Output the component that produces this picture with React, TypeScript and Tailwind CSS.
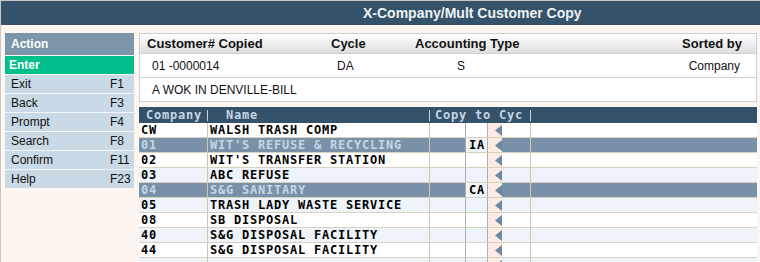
import React from "react";

const menu = [
  { label: "Exit", key: "F1" },
  { label: "Back", key: "F3" },
  { label: "Prompt", key: "F4" },
  { label: "Search", key: "F8" },
  { label: "Confirm", key: "F11" },
  { label: "Help", key: "F23" },
];

type Row = { c: string; n: string; sel?: boolean; cyc?: string };

const rows: Row[] = [
  { c: "CW", n: "WALSH TRASH COMP" },
  { c: "01", n: "WIT'S REFUSE & RECYCLING", sel: true, cyc: "IA" },
  { c: "02", n: "WIT'S TRANSFER STATION" },
  { c: "03", n: "ABC REFUSE" },
  { c: "04", n: "S&G SANITARY", sel: true, cyc: "CA" },
  { c: "05", n: "TRASH LADY WASTE SERVICE" },
  { c: "08", n: "SB DISPOSAL" },
  { c: "40", n: "S&G DISPOSAL FACILITY" },
  { c: "44", n: "S&G DISPOSAL FACILITY" },
  { c: "", n: "" },
];

const mono = "font-['DejaVu_Sans_Mono',monospace] font-bold text-[12px] tracking-[0.78px] whitespace-pre";

function Arrow() {
  return (
    <svg width="7" height="11" viewBox="0 0 7 11">
      <polygon points="7,0 7,11 0,5.5" fill="#6b89a3" />
    </svg>
  );
}

export default function App() {
  return (
    <div className="w-[760px] h-[262px] overflow-hidden bg-[#fdf6f0] border-t border-l border-[#c8c8c8] font-['Liberation_Sans',Arial,sans-serif]">
      <div className="h-[24px] bg-[#345269] text-[#eef2f5] font-bold text-[14px] flex items-center pl-[362px]">
        X-Company/Mult Customer Copy
      </div>
      <div className="flex pt-[8px] pl-[4px]">
        <div className="w-[129px] flex flex-col">
          <div className="h-[22px] bg-[#7b95aa] text-white font-bold text-[12px] pl-[6px] flex items-center">
            Action
          </div>
          <div className="h-[19px] border-t border-[#f4f7fa] bg-[#00bf8a] text-white font-bold text-[12px] pl-[4px] flex items-center">
            Enter
          </div>
          {menu.map((m) => (
            <div
              key={m.label}
              className="h-[19px] border-t border-[#f4f7fa] bg-[#c9d9e5] text-[#111] text-[12px] flex items-center"
            >
              <span className="pl-[6px] w-[105px]">{m.label}</span>
              <span>{m.key}</span>
            </div>
          ))}
        </div>
        <div className="ml-[5px] w-[618px] flex flex-col">
          <div className="border border-[#cfcfcf] bg-white text-[#111]">
            <div className="h-[19px] flex items-center font-bold text-[13px] bg-gradient-to-b from-white to-[#dedede]">
              <span className="pl-[7px] w-[191px]">Customer# Copied</span>
              <span className="w-[84px]">Cycle</span>
              <span>Accounting Type</span>
              <span className="flex-1 text-right pr-[14px]">Sorted by</span>
            </div>
            <div className="h-[24px] border-t border-[#d0d0d0] flex items-center text-[12px]">
              <span className="pl-[12px] w-[197px]">01 -0000014</span>
              <span className="w-[120px]">DA</span>
              <span>S</span>
              <span className="flex-1 text-right pr-[16px]">Company</span>
            </div>
            <div className="h-[24px] border-t border-[#d0d0d0] flex items-center text-[12px]">
              <span className="pl-[12px]">A WOK IN DENVILLE-BILL</span>
            </div>
          </div>
          <div className="mt-[5px]">
            <div className={`h-[16px] bg-[#345269] text-[#c4d6e6] flex items-center ${mono}`}>
              <span className="w-[68px] pl-[7px]">Company</span>
              <span className="w-px h-[11px] bg-[#c4d6e6]" />
              <span className="w-[221px] pl-[18px]">Name</span>
              <span className="w-px h-[11px] bg-[#c4d6e6]" />
              <span className="w-[100px] pl-[5px]">Copy to Cyc</span>
              <span className="w-px h-[11px] bg-[#c4d6e6]" />
            </div>
            {rows.map((r, i) => {
              const bg = r.sel ? "bg-[#7891a8]" : i % 2 ? "bg-[#eef3f9]" : "bg-white";
              const fg = r.sel ? "text-[#c6d6e6]" : "text-black";
              return (
                <div
                  key={i}
                  className={`h-[15px] flex border-b border-[#d6d2bf] ${bg} ${fg} ${mono} leading-[14px]`}
                >
                  <div className="w-[69px] border-r border-[#cdc9ae] pl-[2px]">{r.c}</div>
                  <div className="w-[222px] border-r border-[#cdc9ae] pl-[2px]">{r.n}</div>
                  <div className="w-[101px] border-r border-[#cdc9ae] flex">
                    <div
                      className={`ml-[35px] w-[23px] border-l border-r border-[#a4aebc] pl-[3px] text-black ${
                        r.sel ? "bg-[#f2f5f8]" : ""
                      }`}
                    >
                      {r.cyc ?? ""}
                    </div>
                    <div className="w-[14px] bg-[#fcebe2] flex items-center justify-end">
                      <Arrow />
                    </div>
                  </div>
                  <div className="flex-1" />
                </div>
              );
            })}
          </div>
        </div>
      </div>
    </div>
  );
}
